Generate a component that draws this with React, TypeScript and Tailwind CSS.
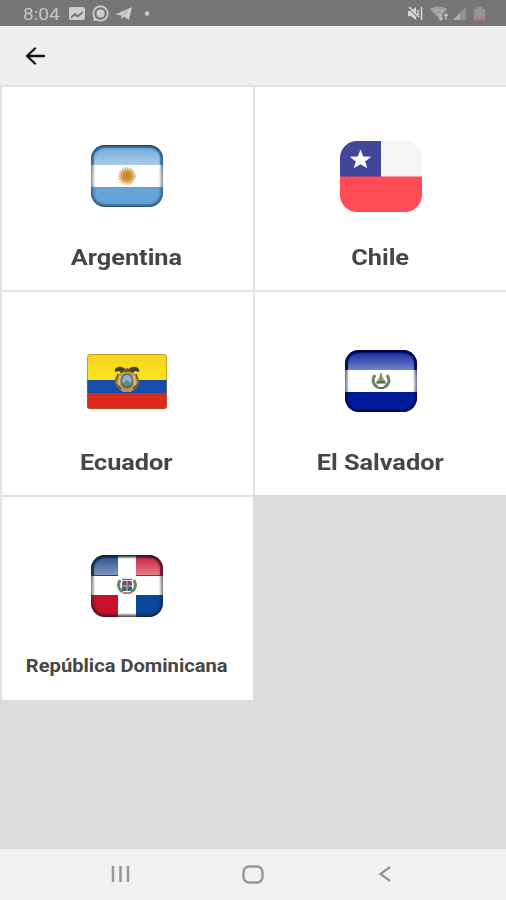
import type { ReactNode } from "react";

function GlossyFlag({ id, edge, children }: { id: string; edge: string; children: ReactNode }) {
  return (
    <svg width="74" height="64" viewBox="0 0 74 64">
      <defs>
        <clipPath id={`${id}-clip`}>
          <rect x="1" y="1" width="72" height="62" rx="14" />
        </clipPath>
        <linearGradient id={`${id}-gloss`} x1="0" y1="0" x2="0" y2="1">
          <stop offset="0" stopColor="#fff" stopOpacity="0.1" />
          <stop offset="1" stopColor="#fff" stopOpacity="0.45" />
        </linearGradient>
        <linearGradient id={`${id}-edge`} x1="0" y1="0" x2="0" y2="1">
          <stop offset="0" stopColor={edge} />
          <stop offset="0.3" stopColor={edge} stopOpacity="0.65" />
          <stop offset="0.55" stopColor={edge} stopOpacity="0.5" />
          <stop offset="1" stopColor={edge} stopOpacity="0.8" />
        </linearGradient>
        <filter id={`${id}-soft`}>
          <feGaussianBlur stdDeviation="0.8" />
        </filter>
      </defs>
      <g clipPath={`url(#${id}-clip)`}>
        {children}
        <path d="M4 21V14Q4 4 16 4H58Q70 4 70 14V21Z" fill={`url(#${id}-gloss)`} />
        <rect x="1" y="1" width="72" height="62" rx="14" fill="none" stroke={`url(#${id}-edge)`} strokeWidth="4.6" filter={`url(#${id}-soft)`} />
      </g>
    </svg>
  );
}

function Argentina() {
  return (
    <GlossyFlag id="ar" edge="#1f425f">
      <rect width="74" height="64" fill="#64a2d7" />
      <rect y="21" width="74" height="22" fill="#fff" />
      <circle cx="37" cy="32" r="7" fill="#e6bd8a" />
      <circle cx="37" cy="32" r="7.5" fill="none" stroke="#dfad70" strokeWidth="2.4" strokeDasharray="1.6 0.9" />
      <circle cx="37" cy="32" r="6" fill="#d89942" />
      <circle cx="37" cy="32" r="3.5" fill="#c98534" />
    </GlossyFlag>
  );
}

function Chile() {
  return (
    <svg width="82" height="71" viewBox="0 0 82 71">
      <defs>
        <clipPath id="cl-clip">
          <rect width="82" height="71" rx="17" />
        </clipPath>
      </defs>
      <g clipPath="url(#cl-clip)">
        <rect width="82" height="71" fill="#f5f5f5" />
        <rect width="41" height="36" fill="#41479b" />
        <rect y="35.5" width="82" height="36" fill="#ff4b55" />
        <path d="M20.5 8.5L23.2 15.6L31.3 15.8L25.1 20.5L27.3 27.3L20.5 23.3L13.7 27.3L15.9 20.5L9.7 15.8L17.8 15.6Z" fill="#fff" />
      </g>
    </svg>
  );
}

function Ecuador() {
  return (
    <svg width="80" height="55" viewBox="0 0 80 55">
      <defs>
        <clipPath id="ec-clip">
          <rect width="80" height="55" rx="3" />
        </clipPath>
        <linearGradient id="ec-y" x1="0" y1="0" x2="0" y2="1">
          <stop offset="0" stopColor="#f4d51f" />
          <stop offset="1" stopColor="#fce51f" />
        </linearGradient>
      </defs>
      <g clipPath="url(#ec-clip)">
        <rect width="80" height="27" fill="url(#ec-y)" />
        <rect y="26" width="80" height="14" fill="#164eae" />
        <rect y="39" width="80" height="16" fill="#de291f" />
        <rect x="0.5" y="0.5" width="79" height="54" rx="3" fill="none" stroke="#966b32" strokeOpacity="0.55" />
      </g>
      <path d="M39 16Q36 12 31 13Q27 14 28 18L32 17L35 20ZM41 16Q44 12 49 13Q53 14 52 18L48 17L45 20Z" fill="#4c421f" />
      <path d="M31 20Q26 29 31 34L36 38H44L49 34Q54 29 49 20L44 18H36Z" fill="#b99a50" />
      <path d="M31 20L28 29L34 35M49 20L52 29L46 35" fill="none" stroke="#6e5d3f" strokeWidth="1.8" />
      <path d="M33 22L32 31M47 22L48 31" fill="none" stroke="#d9c58a" strokeWidth="1.6" />
      <path d="M36 16L40 14L44 16L43 18H37Z" fill="#6d5930" />
      <ellipse cx="40" cy="27" rx="6.2" ry="7.6" fill="#5f6058" />
      <ellipse cx="40" cy="26.5" rx="4.8" ry="5.8" fill="#86b7d5" />
      <path d="M36 29L40 26L44 29L42 32H38Z" fill="#5f8a86" />
    </svg>
  );
}

function ElSalvador() {
  return (
    <GlossyFlag id="sv" edge="#020438">
      <rect width="74" height="64" fill="#001c9b" />
      <rect y="21" width="74" height="22" fill="#fff" />
      <path d="M31 26Q26 34 34 38.5M43 26Q48 34 40 38.5" fill="none" stroke="#63875c" strokeWidth="2.8" />
      <path d="M37 25L43 35H31Z" fill="#a2aa63" />
      <path d="M33 33H41M34 39H40" stroke="#4f7268" strokeWidth="2" />
      <path d="M37 24V32" stroke="#688675" strokeWidth="1.5" />
    </GlossyFlag>
  );
}

function Dominicana() {
  return (
    <GlossyFlag id="do" edge="#171c2b">
      <rect width="74" height="64" fill="#fff" />
      <rect width="28" height="22" fill="#174487" />
      <rect x="46" width="28" height="22" fill="#c9142c" />
      <rect y="41" width="28" height="23" fill="#cc102b" />
      <rect x="46" y="41" width="28" height="23" fill="#08479a" />
      <path d="M30 26Q26 34 33 38M44 26Q48 34 41 38" fill="none" stroke="#66856c" strokeWidth="3" />
      <rect x="32" y="27" width="10" height="10" rx="2" fill="#385e80" />
      <path d="M37 27V37M32 32H42" stroke="#b9a5a0" strokeWidth="1.4" />
      <path d="M33 28L36 31M41 28L38 31" stroke="#b34040" strokeWidth="1.8" />
      <path d="M32 25.5H42" stroke="#58738b" strokeWidth="1.6" />
      <path d="M33 39H41" stroke="#a95251" strokeWidth="1.5" />
    </GlossyFlag>
  );
}

function StatusBar() {
  return (
    <div className="flex h-[26px] items-center bg-[#767676] pt-0.5 pl-[23px] pr-[20px]">
      <span className="w-[45px] text-[17px] leading-none text-[#c6c6c6]">
        <span className="inline-block origin-left scale-x-[1.12]">8:04</span>
      </span>
      <svg width="84" height="18" viewBox="0 0 84 18" className="text-[#cecece]">
        <rect x="1" y="2" width="16" height="13" rx="2" fill="currentColor" />
        <path d="M3 13V11L7 8L10 10L15 6V8L10 12.5L7 11Z" fill="#777" />
        <circle cx="32.5" cy="8.5" r="7.2" fill="none" stroke="currentColor" strokeWidth="1.7" />
        <path d="M26 12L25 16L30 15" fill="currentColor" />
        <circle cx="32.5" cy="8.5" r="4" fill="currentColor" />
        <path d="M47.5 9.5L64 2L61 15L56 11.5L53.5 14V10.5Z" fill="currentColor" />
        <path d="M54 10.5L60 5.5" stroke="#a2a2a2" />
        <circle cx="79" cy="8.5" r="2.2" fill="currentColor" />
      </svg>
      <svg width="80" height="18" viewBox="0 0 80 18" className="ml-auto">
        <path d="M2 6H5L10 2V15L5 11H2Z" fill="#d5d5d5" />
        <path d="M2 2L14 14" stroke="#767676" strokeWidth="2" />
        <path d="M3 2L13 12M12 5V10M15.5 2V15" stroke="#d5d5d5" strokeWidth="1.5" />
        <path d="M24 4Q32 -1 41 4L33 13Z" fill="#a9a9a9" />
        <path d="M26 5Q32 1 39 5M29 8Q33 6 36 8" fill="none" stroke="#929292" />
        <path d="M35 10V15M33 13L35 15L37 13M40 15V9M38 11L40 9L42 11" fill="none" stroke="#c0c0c0" strokeWidth="1.4" />
        <path d="M47 15L60 2V15Z" fill="#929292" />
        <path d="M47 15L54 8V15Z" fill="#afafaf" />
        <path d="M68 4H71V2H76V4H79V15H68Z" fill="#959595" />
        <rect x="69" y="12.5" width="9" height="3" fill="#c17667" />
      </svg>
    </div>
  );
}

const countries = [
  { name: "Argentina", flag: <Argentina />, label: "text-[22px] scale-x-[1.15]" },
  { name: "Chile", flag: <Chile />, label: "text-[22px] scale-x-[1.15]" },
  { name: "Ecuador", flag: <Ecuador />, label: "text-[22px] scale-x-[1.15]" },
  { name: "El Salvador", flag: <ElSalvador />, label: "text-[22px] scale-x-[1.15]" },
  { name: "República Dominicana", flag: <Dominicana />, label: "text-[17.5px] scale-x-[1.15] -translate-y-px" },
];

export default function App() {
  return (
    <div className="flex h-[900px] w-[506px] flex-col overflow-hidden bg-[#dcdcdc] font-['Roboto',sans-serif]">
      <StatusBar />
      <header className="flex h-[59px] items-center bg-[#eeeeee] pl-[25px]">
        <button aria-label="Volver">
          <svg width="22" height="20" viewBox="0 0 22 20" fill="none" stroke="#151515" strokeWidth="2.3" strokeLinecap="round" strokeLinejoin="round">
            <path d="M19 10H2M10 2.5L2 10L10 17.5" />
          </svg>
        </button>
      </header>
      <main className="flex-1">
        <div className="grid grid-cols-[253px_253px]">
          {countries.map((c) => (
            <div key={c.name} className="flex h-[205px] flex-col border-t-2 border-l-2 border-[#e3e3e3] bg-white pt-[50px] odd:pr-[2px]">
              <div className="flex h-[78px] items-center justify-center">{c.flag}</div>
              <div className="mt-[28px] flex h-7 items-center justify-center">
                <span className={`whitespace-nowrap font-bold text-[#464646] ${c.label}`}>{c.name}</span>
              </div>
            </div>
          ))}
        </div>
      </main>
      <nav className="flex h-[51px] items-center bg-[#f1f1f1] pb-px pl-[110px]">
        <svg width="21" height="18" viewBox="0 0 21 18" stroke="#969696" strokeWidth="2.5">
          <path d="M3 1V17M10.5 1V17M18 1V17" />
        </svg>
        <svg width="22" height="19" viewBox="0 0 22 19" fill="none" stroke="#969696" strokeWidth="2.4" className="ml-[111px]">
          <rect x="1.5" y="1.5" width="19" height="16" rx="5.5" />
        </svg>
        <svg width="14" height="18" viewBox="0 0 14 18" fill="none" stroke="#969696" strokeWidth="2.2" className="ml-[114px]">
          <path d="M12 2L2.5 9L12 16" />
        </svg>
      </nav>
    </div>
  );
}
